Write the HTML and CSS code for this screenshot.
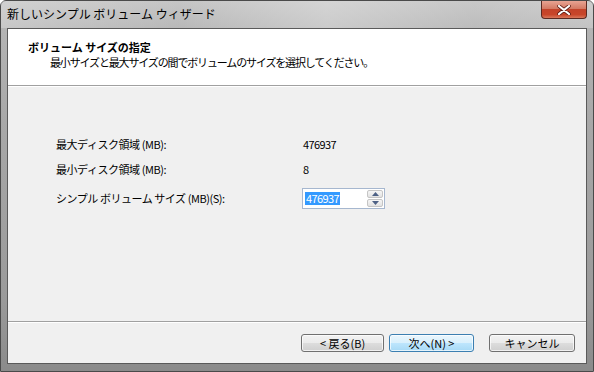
FILE: index.html
```html
<!DOCTYPE html>
<html lang="ja">
<head>
<meta charset="utf-8">
<link rel="stylesheet" href="styles.css">
</head>
<body>
<div class="window">
  <div class="titlebar">
    <span class="title">新しいシンプル ボリューム ウィザード</span>
    <div class="close"><svg width="14" height="10" viewBox="0 0 14 10"><path d="M2 1 L12 9 M12 1 L2 9" stroke="#5a1a12" stroke-width="3.6" stroke-linecap="round"/><path d="M2 1 L12 9 M12 1 L2 9" stroke="#ffffff" stroke-width="2.2" stroke-linecap="round"/></svg></div>
  </div>
  <div class="client">
    <div class="header">
      <div class="h-title">ボリューム サイズの指定</div>
      <div class="h-sub">最小サイズと最大サイズの間でボリュームのサイズを選択してください。</div>
    </div>
    <div class="body">
      <div class="grid">
        <div class="label">最大ディスク領域 (MB):</div>
        <div class="value">476937</div>
        <div class="label">最小ディスク領域 (MB):</div>
        <div class="value">8</div>
        <div class="label">シンプル ボリューム サイズ (MB)(S):</div>
        <div class="spin">
          <div class="edit"><span class="sel">476937</span></div>
          <div class="arrows">
            <div class="arrow"><svg width="7" height="4" viewBox="0 0 7 4"><path d="M0 4 L3.5 0 L7 4 Z" fill="#4d6185"/></svg></div>
            <div class="arrow"><svg width="7" height="4" viewBox="0 0 7 4"><path d="M0 0 L3.5 4 L7 0 Z" fill="#4d6185"/></svg></div>
          </div>
        </div>
      </div>
    </div>
    <div class="footer">
      <button class="btn">&lt; 戻る(B)</button>
      <button class="btn default">次へ(N) &gt;</button>
      <button class="btn cancel">キャンセル</button>
    </div>
  </div>
</div>
</body>
</html>
```
FILE: styles.css
```css
html, body {
  margin: 0;
  padding: 0;
  background: #ffffff;
}
body {
  font-family: "Noto Sans CJK JP", "Noto Sans", sans-serif;
  font-size: 11px;
  color: #000;
}
.window {
  width: 594px;
  height: 372px;
  box-sizing: border-box;
  display: flex;
  flex-direction: column;
  background: linear-gradient(180deg, #c2c2c2 0px, #b4b4b4 28px, #a8a8a8 120px, #9a9a9a 300px, #8a8a8a 372px);
  border: 1px solid #4a4a4a;
  border-radius: 6px 6px 0 0;
}
.titlebar {
  height: 27px;
  display: flex;
  align-items: flex-start;
  padding-left: 6px;
  background: linear-gradient(90deg, rgba(255,255,255,0.25) 0%, rgba(255,255,255,0.05) 30%, rgba(255,255,255,0.3) 55%, rgba(255,255,255,0.1) 80%, rgba(255,255,255,0.2) 100%);
}
.title {
  font-size: 12px;
  line-height: 12px;
  margin-top: 7px;
  color: #000;
}
.close {
  margin-left: auto;
  margin-right: 6px;
  width: 46px;
  height: 18px;
  box-sizing: border-box;
  border: 1px solid #5b2a22;
  border-top: none;
  border-radius: 0 0 4px 4px;
  background: linear-gradient(180deg, #e8a493 0%, #d47a64 45%, #c3432a 50%, #c8462a 80%, #d9775b 100%);
  display: flex;
  align-items: center;
  justify-content: center;
}
.client {
  flex: 1;
  margin: 0 6px 7px 6px;
  border: 1px solid #5a5a5a;
  background: #f0f0f0;
  display: flex;
  flex-direction: column;
}
.header {
  height: 57px;
  background: #ffffff;
  border-bottom: 1px solid #a0a0a0;
  box-shadow: 0 1px 0 #ffffff;
  box-sizing: border-box;
  padding-top: 11px;
  padding-left: 20px;
}
.h-title {
  font-weight: bold;
  line-height: 14px;
}
.h-sub {
  padding-left: 22px;
  line-height: 14px;
  margin-top: 1px;
  letter-spacing: -1.15px;
}
.body {
  flex: 1;
  padding: 51px 0 0 48px;
  border-bottom: 1px solid #a0a0a0;
  box-shadow: 0 1px 0 #ffffff;
}
.grid {
  display: grid;
  grid-template-columns: 247px auto;
  grid-template-rows: 14px 14px 21px;
  row-gap: 11px;
  align-items: center;
}
.label {
  line-height: 14px;
  letter-spacing: -0.45px;
}
.value {
  line-height: 14px;
  letter-spacing: -0.6px;
}
.grid .spin {
  display: flex;
  align-items: stretch;
  height: 21px;
  width: 83px;
  box-sizing: border-box;
  border: 1px solid #a6b7cf;
  background: #fff;
  margin-top: 2px;
  margin-left: -1px;
}
.edit {
  flex: 1;
  display: flex;
  align-items: center;
  padding-left: 2px;
}
.sel {
  background: #3399ff;
  color: #fff;
  line-height: 13px;
  padding: 0 1px;
  letter-spacing: -0.6px;
}
.arrows {
  width: 16px;
  display: flex;
  flex-direction: column;
  gap: 1px;
  padding: 1px 1px 1px 0;
}
.arrow {
  flex: 1;
  display: flex;
  align-items: center;
  justify-content: center;
  border: 1px solid #c5c5c5;
  border-radius: 2px;
  background: linear-gradient(180deg, #f6f6f6, #e2e2e2);
}
.footer {
  height: 41px;
  display: flex;
  align-items: center;
  padding-left: 293px;
  gap: 5px;
}
.btn {
  width: 83px;
  height: 18px;
  padding: 0;
  font-family: inherit;
  font-size: 11px;
  line-height: 14px;
  color: #000;
  border: 1px solid #707070;
  border-radius: 3px;
  background: linear-gradient(180deg, #f2f2f2 0%, #ebebeb 50%, #dddddd 50%, #cfcfcf 100%);
  box-shadow: inset 0 0 0 1px rgba(255,255,255,0.7);
}
.btn.default {
  width: 85px;
  border-color: #3c7fb1;
  background: linear-gradient(180deg, #eaf6fd 0%, #d9f0fc 50%, #bee6fd 50%, #a7d9f5 100%);
}
.btn.cancel {
  margin-left: 10px;
  width: 86px;
}
```
